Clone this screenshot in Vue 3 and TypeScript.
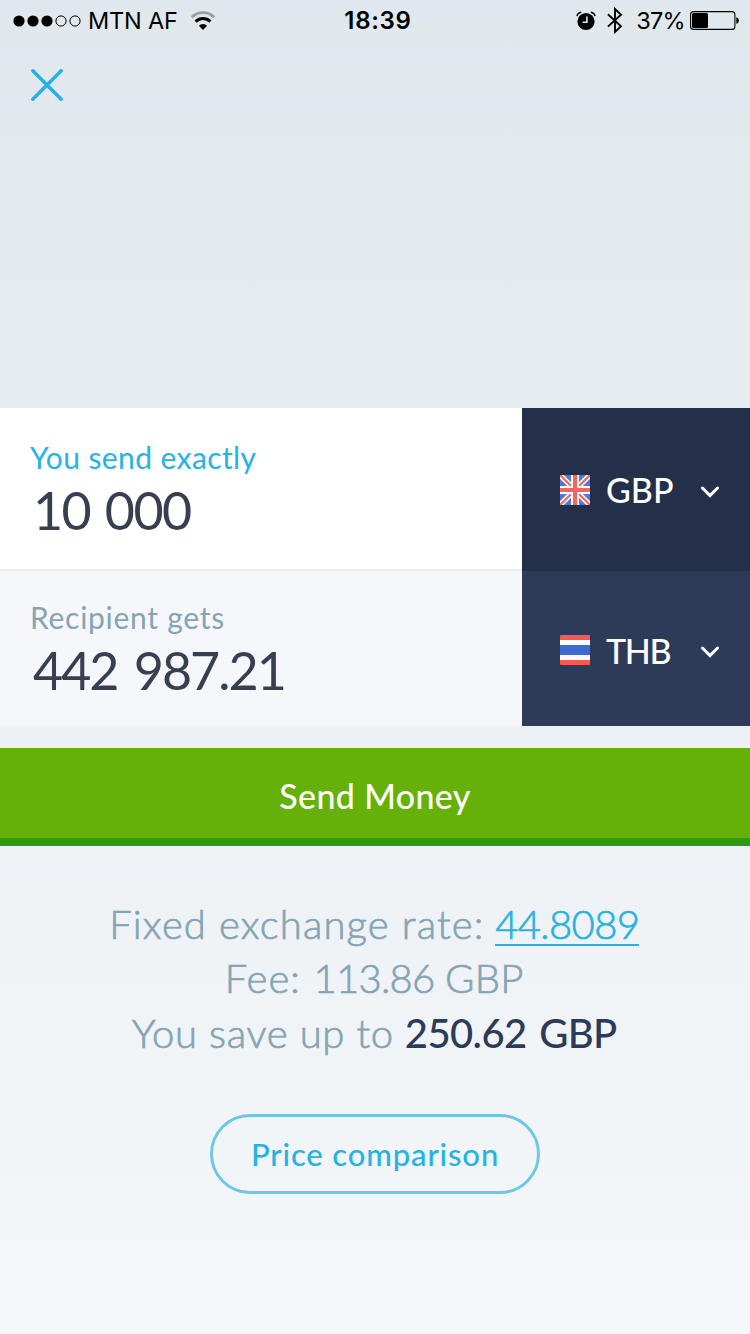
<script setup lang="ts">
type Flag = 'gb' | 'th'

interface AmountRow {
  id: string
  label: string
  value: string
  currency: string
  flag: Flag
}

const rows: AmountRow[] = [
  { id: 'source', label: 'You send exactly', value: '10 000', currency: 'GBP', flag: 'gb' },
  { id: 'target', label: 'Recipient gets', value: '442 987.21', currency: 'THB', flag: 'th' },
]

const signalDots: boolean[] = [true, true, true, false, false]
</script>

<template>
  <main class="screen">
    <header class="status">
      <div class="status-left">
        <svg class="signal" width="68" height="14" viewBox="0 0 68 14">
          <circle
            v-for="(on, i) in signalDots"
            :key="i"
            :cx="6 + i * 14"
            cy="7"
            :r="on ? 5.6 : 5.1"
            :fill="on ? '#000' : 'none'"
            :stroke="on ? 'none' : '#000'"
            stroke-width="1"
          />
        </svg>
        <span class="carrier">MTN AF</span>
        <svg class="wifi" width="26" height="20" viewBox="0 0 26 20" fill="none">
          <path d="M1.7 6.3a16 16 0 0 1 22.6 0" stroke="#9ba1a5" stroke-width="2.8" />
          <path d="M5.6 10.6a10.5 10.5 0 0 1 14.8 0" stroke="#000" stroke-width="3" />
          <path d="M13 19 8.9 14.7a5.8 5.8 0 0 1 8.2 0z" fill="#000" />
        </svg>
      </div>
      <time class="clock">18:39</time>
      <div class="status-right">
        <svg class="alarm" width="20" height="20" viewBox="0 0 20 20" fill="none">
          <circle cx="10" cy="10.5" r="8.6" fill="#000" />
          <path d="M1 5.2Q1.6 1.8 5.2 1.2M19 5.2Q18.4 1.8 14.8 1.2" stroke="#000" stroke-width="1.5" />
          <path d="M10.9 5.6v5.7H6.6" stroke="#e1e8ed" stroke-width="1.6" />
        </svg>
        <svg class="bluetooth" width="16" height="27" viewBox="0 0 16 27" fill="none" stroke="#000" stroke-width="1.9">
          <path d="M.9 7.3 14 19.2l-6 5.7V2l6 5.7L.9 19.6" />
        </svg>
        <span class="percent">37%</span>
        <svg class="battery" width="50" height="20" viewBox="0 0 50 20">
          <rect x=".6" y=".6" width="44.3" height="17.8" rx="3" fill="none" stroke="#000" stroke-width="1.1" />
          <rect x="2" y="2" width="16" height="15" rx="1.5" fill="#000" />
          <path d="M46.3 6.2q2.6.6 2.6 3.3t-2.6 3.3z" fill="#000" />
        </svg>
      </div>
    </header>

    <nav class="toolbar">
      <button class="close" aria-label="Close">
        <svg width="34" height="34" viewBox="0 0 34 34">
          <path d="M2.8 2.8 31.2 31.2M31.2 2.8 2.8 31.2" stroke="#27b2e2" stroke-width="3.6" stroke-linecap="round" />
        </svg>
      </button>
    </nav>

    <section class="calculator">
      <div v-for="row in rows" :key="row.id" class="row" :class="row.id">
        <div class="amount">
          <div class="label">{{ row.label }}</div>
          <div class="value">{{ row.value }}</div>
        </div>
        <button class="currency">
          <svg v-if="row.flag === 'gb'" class="flag" width="30" height="30" viewBox="0 0 30 30">
            <rect width="30" height="30" fill="#5079da" />
            <path d="M0 0 30 30M30 0 0 30" stroke="#fff" stroke-width="5.4" />
            <path d="M0 0 30 30M30 0 0 30" stroke="#f9655b" stroke-width="2.2" />
            <path d="M15 0v30M0 15h30" stroke="#fff" stroke-width="8" />
            <path d="M15 0v30M0 15h30" stroke="#f9655b" stroke-width="4" />
          </svg>
          <svg v-else class="flag" width="30" height="30" viewBox="0 0 30 30">
            <rect width="30" height="30" rx="1" fill="#f65a4e" />
            <rect y="5" width="30" height="20" fill="#fff" />
            <rect y="10" width="30" height="10" fill="#3d6ad6" />
          </svg>
          <span class="code">{{ row.currency }}</span>
          <svg class="chevron" width="20" height="14" viewBox="0 0 20 14">
            <path d="m2.4 3 7.6 7.6L17.6 3" fill="none" stroke="#fff" stroke-width="3" stroke-linecap="round" />
          </svg>
        </button>
      </div>
    </section>

    <button class="send">Send Money</button>

    <section class="summary">
      <p class="rate"><span>Fixed exchange rate:</span><a class="link">44.8089</a></p>
      <p class="fee"><span>Fee:</span><span class="fee-value">113.86</span><span>GBP</span></p>
      <p class="saving"><span>You save up to</span><strong>250.62 GBP</strong></p>
    </section>

    <button class="compare">Price comparison</button>
  </main>
</template>

<style>
body {
  margin: 0;
}
</style>

<style scoped>
.screen {
  display: flex;
  flex-direction: column;
  width: 750px;
  height: 1334px;
  overflow: hidden;
  background: linear-gradient(#e0e8ed, #f5f7fa);
  font-family: Lato, "Liberation Sans", sans-serif;
}

button {
  margin: 0;
  padding: 0;
  border: 0;
  background: none;
  font-family: inherit;
}

svg {
  display: block;
  flex: none;
}

.status {
  display: grid;
  grid-template-columns: 1fr auto 1fr;
  height: 41px;
  color: #000;
  font: 400 23.5px/41px Inter, "Liberation Sans", sans-serif;
}

.status-left,
.status-right {
  display: flex;
  align-items: center;
}

.status-left {
  padding-left: 12.5px;
}

.carrier {
  margin-left: 7.5px;
  letter-spacing: -0.2px;
}

.wifi {
  margin-left: 12px;
}

.clock {
  margin-left: 6px;
  font-size: 24px;
  font-weight: 600;
  letter-spacing: 0.7px;
}

.status-right {
  justify-content: flex-end;
  padding-right: 10.5px;
}

.bluetooth {
  margin-left: 11px;
}

.percent {
  margin: 0 4.5px 0 13px;
  letter-spacing: -0.7px;
}

.toolbar {
  height: 367px;
}

.close {
  display: block;
  margin: 27px 0 0 30px;
}

.row {
  display: grid;
  grid-template-columns: 522px 1fr;
}

.amount {
  box-sizing: border-box;
  padding-left: 30px;
}

.source .amount {
  height: 163px;
  padding-top: 29px;
  border-bottom: 2px solid #e6ecf0;
  background: #fff;
}

.target .amount {
  height: 155px;
  padding-top: 26px;
  background: #f5f7fa;
}

.label {
  height: 40px;
  font-size: 30px;
  line-height: 40px;
}

.source .label {
  color: #27b2e2;
  letter-spacing: 0.4px;
}

.target .label {
  color: #86a4b3;
  letter-spacing: 0.72px;
}

.value {
  margin: 3px 0 0 3px;
  color: #373f51;
  font-size: 52px;
  line-height: 60px;
}

.source .value {
  letter-spacing: -1.6px;
  word-spacing: 3px;
}

.target .value {
  letter-spacing: -2px;
  word-spacing: 5px;
}

.currency {
  display: flex;
  align-items: center;
  padding-left: 38px;
  color: #fff;
  font-size: 34px;
  font-weight: 500;
}

.source .currency {
  background: #242f4a;
}

.target .currency {
  padding-top: 3px;
  background: #2d3a58;
}

.code {
  width: 94px;
  margin-left: 16px;
  text-align: left;
}

.target .code {
  letter-spacing: -1.3px;
}

.chevron {
  margin-top: 4px;
}

.send {
  box-sizing: content-box;
  height: 88px;
  margin-top: 22px;
  padding-top: 2px;
  border-bottom: 8px solid #2f9a0e;
  background: #65b10a;
  color: #fff;
  font-size: 34px;
  font-weight: 500;
  line-height: 92px;
  letter-spacing: 0.35px;
}

.summary {
  margin: 51px 1.5px 0 0;
  color: #86a4b3;
  font-size: 40px;
  font-weight: 300;
  line-height: 54.3px;
  -webkit-text-stroke: 0.7px;
}

.summary p {
  display: flex;
  justify-content: center;
  margin: 0;
}

.rate {
  gap: 10.8px;
  height: 54.3px;
  letter-spacing: 1.13px;
}

.link {
  height: 47px;
  border-bottom: 2px solid #27b2e2;
  color: #27b2e2;
  letter-spacing: -0.65px;
}

.fee {
  gap: 10.5px;
  height: 54.3px;
  letter-spacing: 1px;
}

.fee span:last-child {
  letter-spacing: 0.3px;
}

.fee .fee-value {
  margin-left: 2px;
  letter-spacing: -0.7px;
}

.saving {
  gap: 11px;
  letter-spacing: 0.65px;
}

.saving strong {
  color: #2d3a58;
  font-weight: 500;
  letter-spacing: -0.6px;
  word-spacing: 3px;
  -webkit-text-stroke: 0;
}

.compare {
  align-self: center;
  box-sizing: border-box;
  width: 330px;
  height: 80px;
  margin-top: 54px;
  border: 3px solid #6dc8e8;
  border-radius: 40px;
  color: #27b2e2;
  font-size: 31px;
  font-weight: 500;
  line-height: 72px;
  letter-spacing: 0.87px;
}
</style>
